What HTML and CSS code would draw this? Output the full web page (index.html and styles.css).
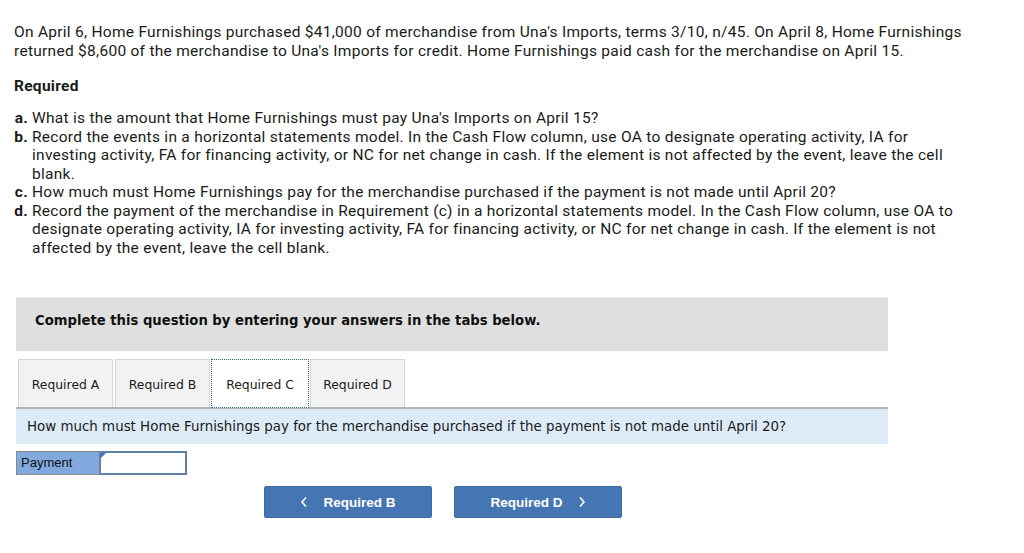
FILE: index.html
```html
<!DOCTYPE html>
<html>
<head>
<meta charset="utf-8">
<link rel="stylesheet" href="styles.css">
</head>
<body>
<div class="page">
  <p class="intro">On April 6, Home Furnishings purchased $41,000 of merchandise from Una's Imports, terms 3/10, n/45. On April 8, Home Furnishings returned $8,600 of the merchandise to Una's Imports for credit. Home Furnishings paid cash for the merchandise on April 15.</p>
  <h3 class="req-title">Required</h3>
  <ol class="req-list">
    <li><span class="lbl">a.</span><span>What is the amount that Home Furnishings must pay Una's Imports on April 15?</span></li>
    <li><span class="lbl">b.</span><span>Record the events in a horizontal statements model. In the Cash Flow column, use OA to designate operating activity, IA for investing activity, FA for financing activity, or NC for net change in cash. If the element is not affected by the event, leave the cell blank.</span></li>
    <li><span class="lbl">c.</span><span>How much must Home Furnishings pay for the merchandise purchased if the payment is not made until April 20?</span></li>
    <li><span class="lbl">d.</span><span>Record the payment of the merchandise in Requirement (c) in a horizontal statements model. In the Cash Flow column, use OA to designate operating activity, IA for investing activity, FA for financing activity, or NC for net change in cash. If the element is not affected by the event, leave the cell blank.</span></li>
  </ol>

  <div class="work">
    <div class="banner">Complete this question by entering your answers in the tabs below.</div>
    <div class="tabs">
      <div class="tab">Required A</div>
      <div class="tab">Required B</div>
      <div class="tab active">Required C</div>
      <div class="tab">Required D</div>
    </div>
    <div class="question">How much must Home Furnishings pay for the merchandise purchased if the payment is not made until April 20?</div>
    <div class="answer">
      <div class="answer-label">Payment</div>
      <div class="answer-input"><span class="flag"></span></div>
    </div>
    <div class="nav">
      <button class="nav-btn"><svg class="chev" width="8" height="12" viewBox="0 0 8 12"><polyline points="6,1.5 2,6 6,10.5" fill="none" stroke="#fff" stroke-width="1.6"/></svg><span>Required B</span></button>
      <button class="nav-btn"><span>Required D</span><svg class="chev" width="8" height="12" viewBox="0 0 8 12"><polyline points="2,1.5 6,6 2,10.5" fill="none" stroke="#fff" stroke-width="1.6"/></svg></button>
    </div>
  </div>
</div>
</body>
</html>
```
FILE: styles.css
```css
html, body {
  margin: 0;
  padding: 0;
  background: #fff;
}
.page {
  padding: 23px 0 0 14px;
  font-family: Roboto, "Liberation Sans", sans-serif;
  font-size: 15.5px;
  letter-spacing: 0.28px;
  color: #1a1a1a;
}
.intro {
  margin: 0;
  line-height: 18.5px;
  width: 955px;
}
.req-title {
  margin: 17px 0 0 0;
  font-size: 15.5px;
  font-weight: 700;
  line-height: 18px;
}
.req-list {
  list-style: none;
  margin: 14px 0 0 0;
  padding: 0;
  width: 950px;
  line-height: 18.5px;
}
.req-list li {
  display: flex;
}
.lbl {
  font-weight: 700;
  width: 14px;
  flex: none;
  text-align: right;
  padding-right: 4px;
}
.work {
  margin: 40px 0 0 2px;
  width: 872px;
  letter-spacing: 0;
}
.banner {
  background: #dfdfdf;
  border-top: 1px solid #e9e9e9;
  height: 54px;
  box-sizing: border-box;
  padding: 15px 0 0 19px;
  font-family: "DejaVu Sans", Verdana, sans-serif;
  font-size: 13.2px;
  font-weight: 700;
  color: #111;
}
.tabs {
  display: flex;
  margin-top: 8px;
  padding-left: 2px;
  gap: 2px;
}
.tab {
  width: 95px;
  height: 48px;
  box-sizing: border-box;
  padding-top: 2px;
  background: #f2f2f2;
  border: 1px solid #d6d6d6;
  border-bottom: none;
  display: flex;
  align-items: center;
  justify-content: center;
  font-family: "DejaVu Sans", Verdana, sans-serif;
  font-size: 12.4px;
  color: #1a1a1a;
}
.tab.active {
  background: #fff;
  border: 1px dotted #2f64b5;
  height: 49px;
  margin-bottom: -1px;
  margin-left: -1px;
  width: 98px;
  margin-right: -1px;
}
.question {
  background: #ddebf7;
  border-top: 2px solid #b5b5b5;
  height: 37px;
  box-sizing: border-box;
  padding: 10px 0 0 11px;
  font-family: "DejaVu Sans", Verdana, sans-serif;
  font-size: 13.4px;
  color: #1a1a1a;
}
.answer {
  display: flex;
  margin-top: 7px;
  height: 24px;
}
.answer-label {
  width: 85px;
  box-sizing: border-box;
  background: #82a9de;
  border: 1px solid #888;
  border-right: 2px solid #6a7f9b;
  font-family: "Liberation Sans", Arial, sans-serif;
  font-size: 13px;
  padding: 3px 0 0 4px;
  color: #111;
}
.answer-input {
  width: 86px;
  box-sizing: border-box;
  background: #fff;
  border: 2px solid #5f7fa8;
  border-left: none;
  position: relative;
}
.flag {
  position: absolute;
  left: 0;
  top: 0;
  width: 0;
  height: 0;
  border-left: 5px solid #3a76c8;
  border-bottom: 5px solid transparent;
}
.nav {
  display: flex;
  gap: 22px;
  margin: 11px 0 0 248px;
}
.nav-btn {
  width: 168px;
  height: 32px;
  background: #4675b4;
  border: 1px solid #3f6aa6;
  border-radius: 2px;
  color: #fff;
  font-family: "Liberation Sans", Arial, sans-serif;
  font-weight: 700;
  font-size: 13.5px;
  display: flex;
  align-items: center;
  justify-content: center;
  gap: 15px;
  padding: 0;
}
.chev {
  display: block;
  flex: none;
}
```
